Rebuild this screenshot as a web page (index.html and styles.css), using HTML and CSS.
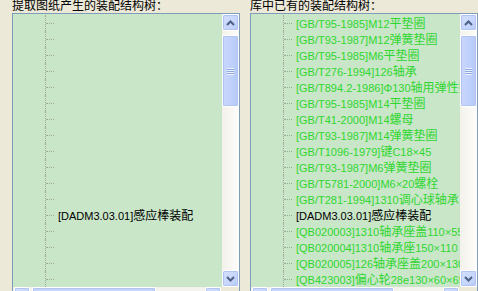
FILE: index.html
```html
<!DOCTYPE html>
<html lang="zh">
<head>
    <meta charset="UTF-8">
    <title>装配结构树</title>
    <link rel="stylesheet" href="styles.css">
</head>
<body>
    <div class="panes">
        <div class="pane">
            <div class="caption">提取图纸产生的装配结构树：</div>
            <div class="listbox">
                <div class="tree-area">
                    <ul class="tree">
                        <li class="node"></li>
                        <li class="node"></li>
                        <li class="node"></li>
                        <li class="node"></li>
                        <li class="node"></li>
                        <li class="node"></li>
                        <li class="node"></li>
                        <li class="node"></li>
                        <li class="node"></li>
                        <li class="node"></li>
                        <li class="node"></li>
                        <li class="node"></li>
                        <li class="node own">[DADM3.03.01]<span class="zh">感应棒装配</span></li>
                        <li class="node"></li>
                        <li class="node"></li>
                        <li class="node"></li>
                        <li class="node"></li>
                    </ul>
                    <div class="vscroll">
                        <div class="sbtn up"><svg width="9" height="6" viewBox="0 0 9 6"><path d="M1 5 L4.5 1.5 L8 5" fill="none" stroke="#4d6185" stroke-width="2"/></svg></div>
                        <div class="thumb"><span class="grip"></span></div>
                        <div class="track"></div>
                        <div class="sbtn down"><svg width="9" height="6" viewBox="0 0 9 6"><path d="M1 1 L4.5 4.5 L8 1" fill="none" stroke="#4d6185" stroke-width="2"/></svg></div>
                    </div>
                </div>
                <div class="hscroll">
                    <div class="sbtn"></div>
                    <div class="hthumb"></div>
                    <div class="htrack"></div>
                    <div class="sbtn"></div>
                    <div class="corner"></div>
                </div>
            </div>
        </div>

        <div class="pane">
            <div class="caption">库中已有的装配结构树：</div>
            <div class="listbox">
                <div class="tree-area">
                    <ul class="tree">
                        <li class="node">[GB/T95-1985]M12<span class="zh">平垫圈</span></li>
                        <li class="node">[GB/T93-1987]M12<span class="zh">弹簧垫圈</span></li>
                        <li class="node">[GB/T95-1985]M6<span class="zh">平垫圈</span></li>
                        <li class="node">[GB/T276-1994]126<span class="zh">轴承</span></li>
                        <li class="node">[GB/T894.2-1986]Φ130<span class="zh">轴用弹性挡圈</span></li>
                        <li class="node">[GB/T95-1985]M14<span class="zh">平垫圈</span></li>
                        <li class="node">[GB/T41-2000]M14<span class="zh">螺母</span></li>
                        <li class="node">[GB/T93-1987]M14<span class="zh">弹簧垫圈</span></li>
                        <li class="node">[GB/T1096-1979]<span class="zh">键</span>C18×45</li>
                        <li class="node">[GB/T93-1987]M6<span class="zh">弹簧垫圈</span></li>
                        <li class="node">[GB/T5781-2000]M6×20<span class="zh">螺栓</span></li>
                        <li class="node">[GB/T281-1994]1310<span class="zh">调心球轴承</span></li>
                        <li class="node own">[DADM3.03.01]<span class="zh">感应棒装配</span></li>
                        <li class="node">[QB020003]1310<span class="zh">轴承座盖</span>110×55</li>
                        <li class="node">[QB020004]1310<span class="zh">轴承座</span>150×110</li>
                        <li class="node">[QB020005]126<span class="zh">轴承座盖</span>200×130</li>
                        <li class="node">[QB423003]<span class="zh">偏心轮</span>28e130×60×65</li>
                    </ul>
                    <div class="vscroll">
                        <div class="sbtn up"><svg width="9" height="6" viewBox="0 0 9 6"><path d="M1 5 L4.5 1.5 L8 5" fill="none" stroke="#4d6185" stroke-width="2"/></svg></div>
                        <div class="thumb"><span class="grip"></span></div>
                        <div class="track"></div>
                        <div class="sbtn down"><svg width="9" height="6" viewBox="0 0 9 6"><path d="M1 1 L4.5 4.5 L8 1" fill="none" stroke="#4d6185" stroke-width="2"/></svg></div>
                    </div>
                </div>
                <div class="hscroll">
                    <div class="sbtn"></div>
                    <div class="hthumb"></div>
                    <div class="htrack"></div>
                    <div class="sbtn"></div>
                    <div class="corner"></div>
                </div>
            </div>
        </div>
    </div>
</body>
</html>
```

FILE: styles.css
```css
:root {
    --window-bg: #ece9d8;
    --tree-bg: #c9e6c8;
    --border: #7f9db9;
    --green-text: #30d630;
    --btn-bg: #c6d6fc;
    --btn-border: #b2c5f2;
}

* {
    box-sizing: border-box;
    margin: 0;
    padding: 0;
}

body {
    background-color: var(--window-bg);
    width: 478px;
    height: 291px;
    overflow: hidden;
    font-family: "Liberation Sans", "Noto Sans CJK SC", sans-serif;
    font-size: 11px;
    color: #000;
}

.panes {
    display: flex;
    gap: 10px;
    padding-left: 12px;
}

.pane {
    width: 228px;
    flex: none;
}

.caption {
    font-family: "Noto Sans CJK SC", sans-serif;
    font-size: 12px;
    line-height: 12px;
    height: 13px;
    margin-top: -1px;
    margin-bottom: 1px;
}

.listbox {
    border: 1px solid var(--border);
    height: 300px;
    background: var(--tree-bg);
    display: flex;
    flex-direction: column;
}

.tree-area {
    display: flex;
    height: 273px;
}

.tree {
    list-style: none;
    flex: 1;
    overflow: hidden;
    padding-top: 1px;
    padding-left: 32px;
}

.node {
    position: relative;
    height: 16px;
    line-height: 16px;
    padding-left: 12px;
    white-space: nowrap;
    color: var(--green-text);
    border-left: 1px dotted #a0a89c;
}

.node::before {
    content: "";
    position: absolute;
    left: 0;
    top: 8px;
    width: 8px;
    border-top: 1px dotted #a0a89c;
}

.node:empty {
    color: transparent;
}

.node.own {
    color: #000;
}

.zh {
    font-family: "Noto Sans CJK SC", sans-serif;
    font-size: 12px;
}

.vscroll {
    width: 17px;
    flex: none;
    display: flex;
    flex-direction: column;
    background: linear-gradient(to right, #f3f1ea, #fdfdfb);
}

.sbtn {
    width: 17px;
    height: 17px;
    flex: none;
    border: 1px solid #fff;
    border-radius: 2px;
    background: linear-gradient(to bottom right, #d2defd, var(--btn-bg) 60%, #b6c9f8);
    box-shadow: inset 0 0 0 1px var(--btn-border);
    display: flex;
    align-items: center;
    justify-content: center;
}

.thumb {
    height: 72px;
    margin: 4px 0 0;
    border: 1px solid #fff;
    border-radius: 2px;
    background: linear-gradient(to right, #c9d7fd, #bccffb 70%, #b4c8f6);
    box-shadow: inset 0 0 0 1px var(--btn-border);
    display: flex;
    align-items: center;
    justify-content: center;
}

.grip {
    width: 7px;
    height: 7px;
    background: repeating-linear-gradient(to bottom, #eef3fe 0 1px, #8ea5db 1px 2px);
}

.track {
    flex: 1;
}

.hscroll {
    height: 17px;
    display: flex;
    background: linear-gradient(to bottom, #f3f1ea, #fdfdfb);
}

.hscroll .sbtn {
    width: 16px;
    margin-left: 1px;
}

.hthumb {
    width: 124px;
    margin-left: 2px;
    border: 1px solid #fff;
    border-radius: 2px;
    background: #c4d4fc;
    box-shadow: inset 0 0 0 1px var(--btn-border);
}

.htrack {
    flex: 1;
}

.corner {
    width: 18px;
    background: var(--window-bg);
}
```
